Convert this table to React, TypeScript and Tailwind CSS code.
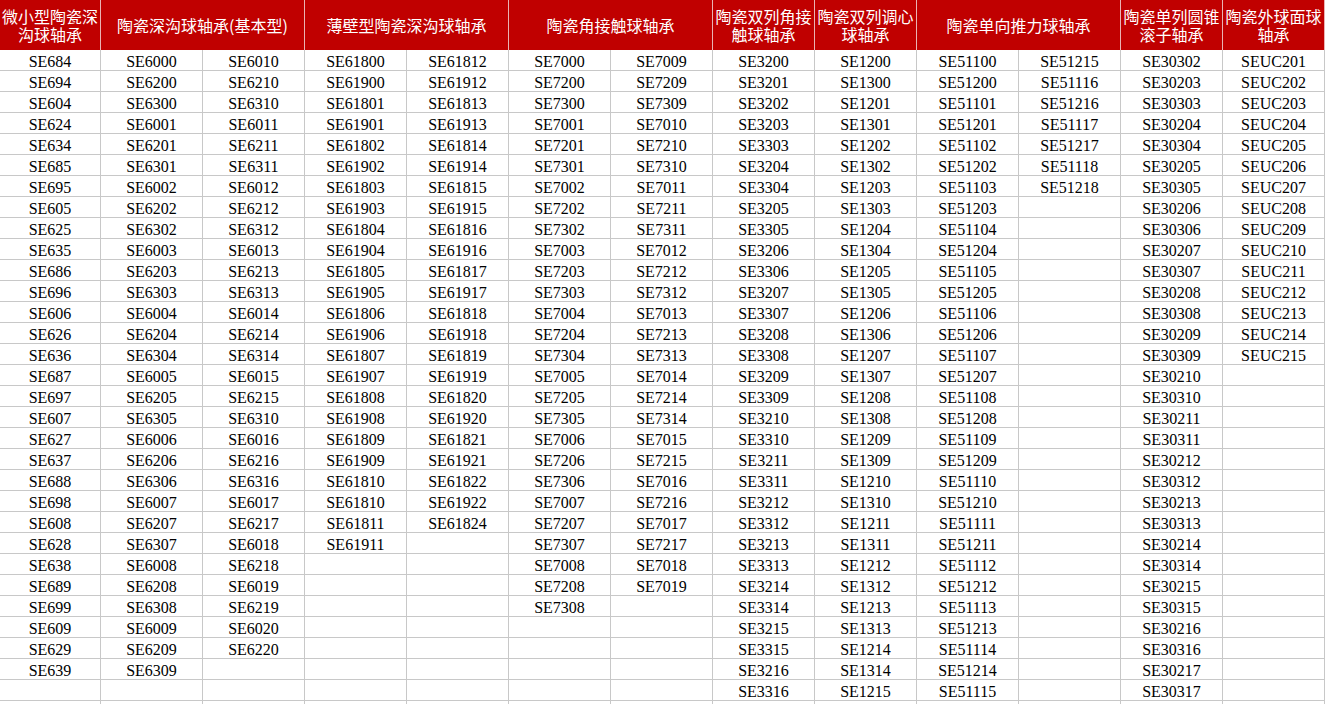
const headers: { label: string; span: number; lines?: string[] }[] = [
  { label: "微小型陶瓷深沟球轴承", span: 1, lines: ["微小型陶瓷深", "沟球轴承"] },
  { label: "陶瓷深沟球轴承(基本型)", span: 2 },
  { label: "薄壁型陶瓷深沟球轴承", span: 2 },
  { label: "陶瓷角接触球轴承", span: 2 },
  { label: "陶瓷双列角接触球轴承", span: 1, lines: ["陶瓷双列角接", "触球轴承"] },
  { label: "陶瓷双列调心球轴承", span: 1, lines: ["陶瓷双列调心", "球轴承"] },
  { label: "陶瓷单向推力球轴承", span: 2 },
  { label: "陶瓷单列圆锥滚子轴承", span: 1, lines: ["陶瓷单列圆锥", "滚子轴承"] },
  { label: "陶瓷外球面球轴承", span: 1, lines: ["陶瓷外球面球", "轴承"] },
];

const seq = (s: string) => s.split(" ");

const columns: string[][] = [
  seq("SE684 SE694 SE604 SE624 SE634 SE685 SE695 SE605 SE625 SE635 SE686 SE696 SE606 SE626 SE636 SE687 SE697 SE607 SE627 SE637 SE688 SE698 SE608 SE628 SE638 SE689 SE699 SE609 SE629 SE639"),
  seq("SE6000 SE6200 SE6300 SE6001 SE6201 SE6301 SE6002 SE6202 SE6302 SE6003 SE6203 SE6303 SE6004 SE6204 SE6304 SE6005 SE6205 SE6305 SE6006 SE6206 SE6306 SE6007 SE6207 SE6307 SE6008 SE6208 SE6308 SE6009 SE6209 SE6309"),
  seq("SE6010 SE6210 SE6310 SE6011 SE6211 SE6311 SE6012 SE6212 SE6312 SE6013 SE6213 SE6313 SE6014 SE6214 SE6314 SE6015 SE6215 SE6310 SE6016 SE6216 SE6316 SE6017 SE6217 SE6018 SE6218 SE6019 SE6219 SE6020 SE6220"),
  seq("SE61800 SE61900 SE61801 SE61901 SE61802 SE61902 SE61803 SE61903 SE61804 SE61904 SE61805 SE61905 SE61806 SE61906 SE61807 SE61907 SE61808 SE61908 SE61809 SE61909 SE61810 SE61810 SE61811 SE61911"),
  seq("SE61812 SE61912 SE61813 SE61913 SE61814 SE61914 SE61815 SE61915 SE61816 SE61916 SE61817 SE61917 SE61818 SE61918 SE61819 SE61919 SE61820 SE61920 SE61821 SE61921 SE61822 SE61922 SE61824"),
  seq("SE7000 SE7200 SE7300 SE7001 SE7201 SE7301 SE7002 SE7202 SE7302 SE7003 SE7203 SE7303 SE7004 SE7204 SE7304 SE7005 SE7205 SE7305 SE7006 SE7206 SE7306 SE7007 SE7207 SE7307 SE7008 SE7208 SE7308"),
  seq("SE7009 SE7209 SE7309 SE7010 SE7210 SE7310 SE7011 SE7211 SE7311 SE7012 SE7212 SE7312 SE7013 SE7213 SE7313 SE7014 SE7214 SE7314 SE7015 SE7215 SE7016 SE7216 SE7017 SE7217 SE7018 SE7019"),
  seq("SE3200 SE3201 SE3202 SE3203 SE3303 SE3204 SE3304 SE3205 SE3305 SE3206 SE3306 SE3207 SE3307 SE3208 SE3308 SE3209 SE3309 SE3210 SE3310 SE3211 SE3311 SE3212 SE3312 SE3213 SE3313 SE3214 SE3314 SE3215 SE3315 SE3216 SE3316"),
  seq("SE1200 SE1300 SE1201 SE1301 SE1202 SE1302 SE1203 SE1303 SE1204 SE1304 SE1205 SE1305 SE1206 SE1306 SE1207 SE1307 SE1208 SE1308 SE1209 SE1309 SE1210 SE1310 SE1211 SE1311 SE1212 SE1312 SE1213 SE1313 SE1214 SE1314 SE1215"),
  seq("SE51100 SE51200 SE51101 SE51201 SE51102 SE51202 SE51103 SE51203 SE51104 SE51204 SE51105 SE51205 SE51106 SE51206 SE51107 SE51207 SE51108 SE51208 SE51109 SE51209 SE51110 SE51210 SE51111 SE51211 SE51112 SE51212 SE51113 SE51213 SE51114 SE51214 SE51115"),
  seq("SE51215 SE51116 SE51216 SE51117 SE51217 SE51118 SE51218"),
  seq("SE30302 SE30203 SE30303 SE30204 SE30304 SE30205 SE30305 SE30206 SE30306 SE30207 SE30307 SE30208 SE30308 SE30209 SE30309 SE30210 SE30310 SE30211 SE30311 SE30212 SE30312 SE30213 SE30313 SE30214 SE30314 SE30215 SE30315 SE30216 SE30316 SE30217 SE30317"),
  seq("SEUC201 SEUC202 SEUC203 SEUC204 SEUC205 SEUC206 SEUC207 SEUC208 SEUC209 SEUC210 SEUC211 SEUC212 SEUC213 SEUC214 SEUC215"),
];

const ROWS = 32;

export default function App() {
  return (
    <div className="h-[704px] w-[1326px] overflow-hidden bg-white">
      <div className="grid grid-cols-[101px_repeat(12,102px)]">
        {headers.map((h) => (
          <div
            key={h.label}
            className={`${h.span === 2 ? "col-span-2" : ""} h-[50px] flex flex-col items-center justify-center bg-[#c00000] border-r border-[#e9b3b3] text-white text-[16px] font-['Noto_Sans_CJK_SC',sans-serif] whitespace-nowrap overflow-hidden`}
          >
            {h.lines ? (
              h.lines.map((l) => (
                <span key={l} className="block h-[18px] leading-[18px]">
                  {l}
                </span>
              ))
            ) : (
              <span className="leading-[20px]">{h.label}</span>
            )}
          </div>
        ))}
        {Array.from({ length: ROWS }).map((_, r) =>
          columns.map((col, c) => (
            <div
              key={`${r}-${c}`}
              className="h-[21px] flex items-center justify-center pt-[2px] border-r border-b border-[#c8c8c8] text-black text-[16px] leading-[19px] font-['Liberation_Serif','Noto_Sans_CJK_SC',serif]"
            >
              {col[r] ?? ""}
            </div>
          ))
        )}
      </div>
    </div>
  );
}
